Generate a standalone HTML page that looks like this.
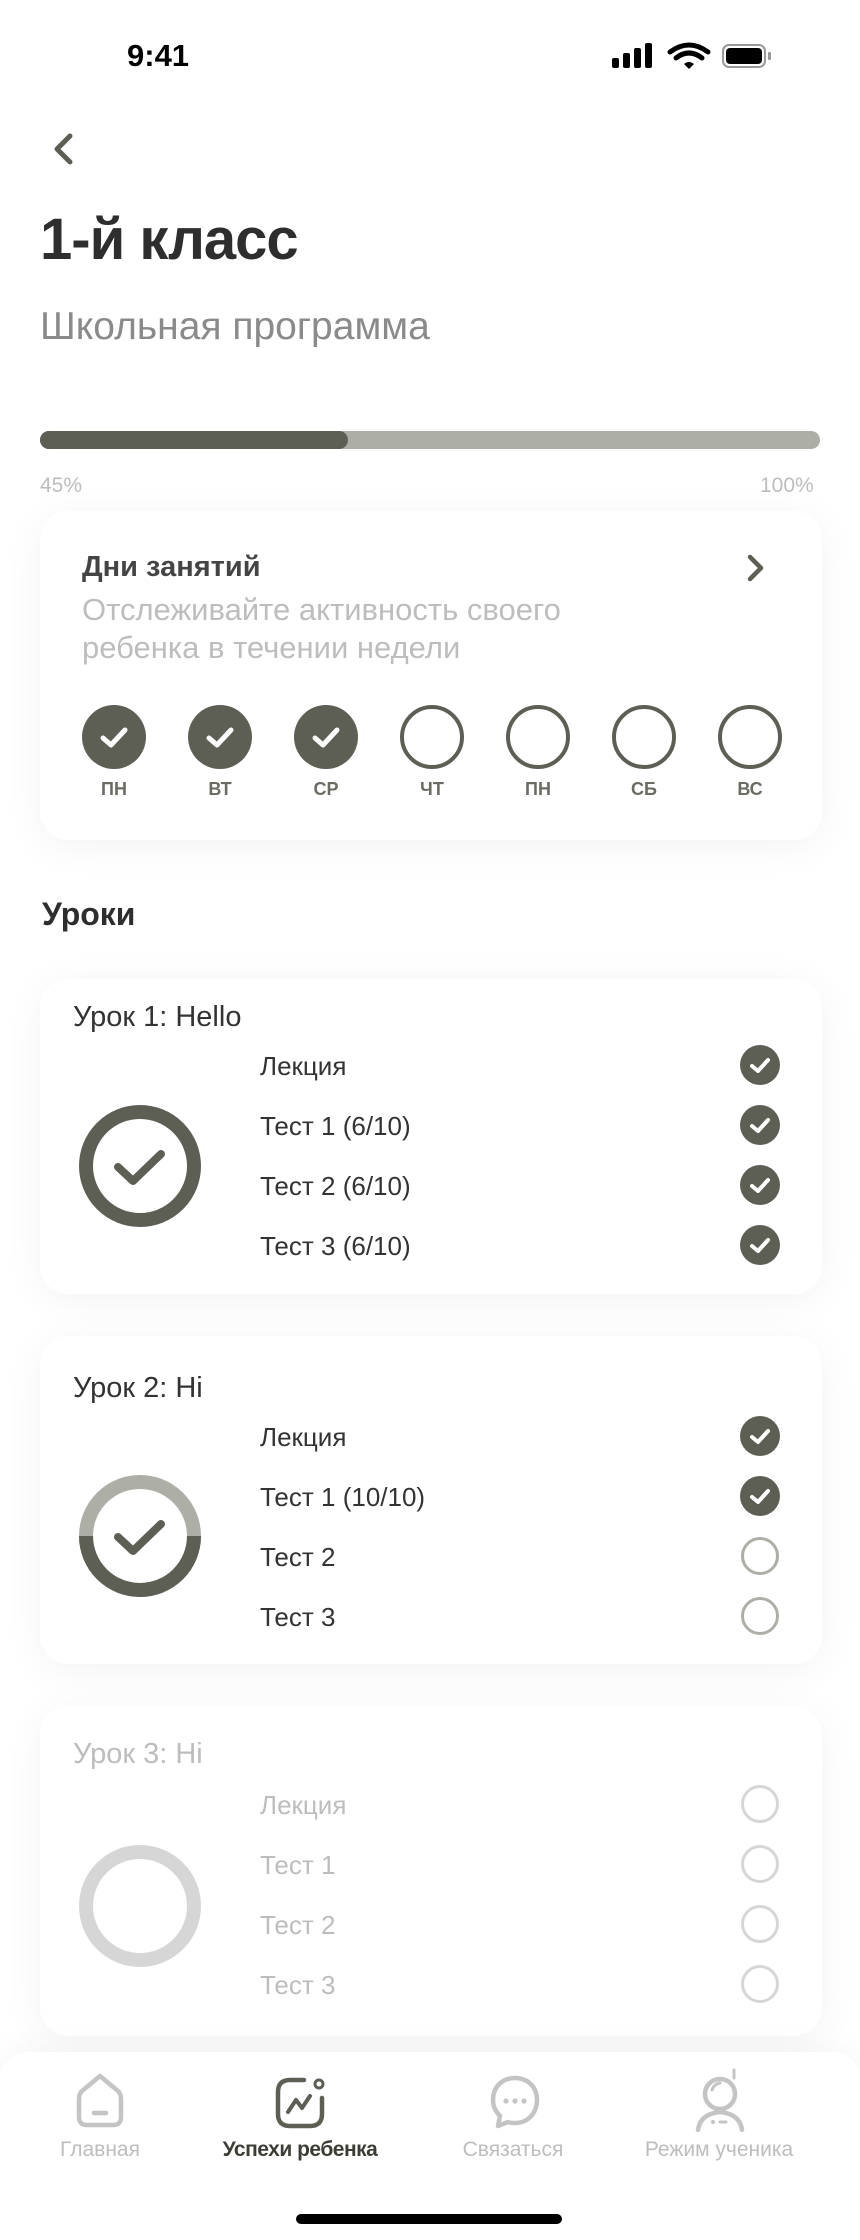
<!DOCTYPE html>
<html><head><meta charset="utf-8"><style>
*{margin:0;padding:0;box-sizing:border-box}
body{width:860px;height:2240px;background:#fff;font-family:"Liberation Sans","DejaVu Sans",sans-serif;position:relative;overflow:hidden;color:#333}
.a{position:absolute}
.card{position:absolute;left:40px;width:782px;background:#fff;border-radius:28px;box-shadow:0 6px 40px rgba(0,0,0,0.05)}
.day{position:absolute;top:194px;width:64px;height:64px;border-radius:50%;margin-left:-32px}
.day.on{background:#5d5f55}
.day.off{border:4px solid #5d5f55}
.dl{position:absolute;top:268px;width:60px;margin-left:-30px;text-align:center;font-size:18px;font-weight:bold;color:#6b6b63}
.lt{position:absolute;left:33px;top:22px;font-size:29px;color:#333}
.it{position:absolute;left:220px;font-size:26px;color:#333}
.ck{position:absolute;left:700px;width:40px;height:40px;margin-top:-2px}
.g .lt,.g .it{color:#bdbdbd}
.tab{position:absolute;top:2138px;width:200px;margin-left:-100px;text-align:center;font-size:21px;color:#bdbdbd}
</style></head><body>
<div class="a" style="left:127px;top:38px;font-size:31px;font-weight:bold;color:#000">9:41</div>
<svg class="a" style="left:610px;top:42px" width="175" height="30" viewBox="0 0 175 30">
<rect x="2" y="16" width="7" height="10" rx="2" fill="#000"/><rect x="13" y="11" width="7" height="15" rx="2" fill="#000"/><rect x="24" y="6" width="7" height="20" rx="2" fill="#000"/><rect x="35" y="1" width="7" height="25" rx="2" fill="#000"/>
<path d="M60 10 Q79 -4 98 10" stroke="#000" stroke-width="5" fill="none" stroke-linecap="round"/><path d="M66 16 Q79 6 92 16" stroke="#000" stroke-width="5" fill="none" stroke-linecap="round"/><path d="M74 22 L79 27 L84 22 Q79 18 74 22Z" fill="#000"/>
<rect x="113" y="3" width="42" height="22" rx="6" fill="none" stroke="#999" stroke-width="2"/><rect x="116" y="6" width="36" height="16" rx="4" fill="#000"/><rect x="158" y="10" width="3" height="8" rx="1" fill="#999"/>
</svg>
<svg class="a" style="left:48px;top:132px" width="30" height="36"><path d="M22 4 L9 17 L22 30" stroke="#5d5f55" stroke-width="5" fill="none" stroke-linecap="round" stroke-linejoin="round"/></svg>
<div class="a" style="left:40px;top:206px;font-size:58px;font-weight:bold;color:#2e2e2e;letter-spacing:-1px">1-й класс</div>
<div class="a" style="left:40px;top:305px;font-size:39px;color:#8a8a8a">Школьная программа</div>
<div class="a" style="left:40px;top:431px;width:780px;height:18px;border-radius:9px;background:#adaea6"></div>
<div class="a" style="left:40px;top:431px;width:308px;height:18px;border-radius:9px;background:#5d5f55"></div>
<div class="a" style="left:40px;top:474px;font-size:21px;color:#bdbdbd">45%</div>
<div class="a" style="left:760px;top:474px;font-size:21px;color:#bdbdbd">100%</div>

<div class="card" style="top:511px;height:329px">
<div class="a" style="left:42px;top:40px;font-size:29px;font-weight:bold;color:#444">Дни занятий</div>
<svg class="a" style="left:704px;top:42px" width="24" height="32"><path d="M6 4 L17 15 L6 26" stroke="#5d5f55" stroke-width="4.5" fill="none" stroke-linecap="round" stroke-linejoin="round"/></svg>
<div class="a" style="left:42px;top:80px;font-size:31px;line-height:38px;color:#bdbdbd">Отслеживайте активность своего<br>ребенка в течении недели</div>
<div class="day on" style="left:74px"><svg width="64" height="64"><path d="M21 33 L29 40 L43 25" stroke="#fff" stroke-width="5" fill="none" stroke-linecap="round" stroke-linejoin="round"/></svg></div>
<div class="day on" style="left:180px"><svg width="64" height="64"><path d="M21 33 L29 40 L43 25" stroke="#fff" stroke-width="5" fill="none" stroke-linecap="round" stroke-linejoin="round"/></svg></div>
<div class="day on" style="left:286px"><svg width="64" height="64"><path d="M21 33 L29 40 L43 25" stroke="#fff" stroke-width="5" fill="none" stroke-linecap="round" stroke-linejoin="round"/></svg></div>
<div class="day off" style="left:392px"></div><div class="day off" style="left:498px"></div><div class="day off" style="left:604px"></div><div class="day off" style="left:710px"></div>
<div class="dl" style="left:74px">ПН</div><div class="dl" style="left:180px">ВТ</div><div class="dl" style="left:286px">СР</div><div class="dl" style="left:392px">ЧТ</div><div class="dl" style="left:498px">ПН</div><div class="dl" style="left:604px">СБ</div><div class="dl" style="left:710px">ВС</div>
</div>

<div class="a" style="left:42px;top:896px;font-size:32px;font-weight:bold;color:#2e2e2e">Уроки</div>

<div class="card" style="top:979px;height:315px">
<div class="lt">Урок 1: Hello</div>
<svg class="a" style="left:38px;top:125px" width="124" height="124"><circle cx="62" cy="62" r="54" stroke="#5d5f55" stroke-width="14" fill="none"/><path d="M40 63 L55 77 L83 50" stroke="#5d5f55" stroke-width="8" fill="none" stroke-linecap="round" stroke-linejoin="round"/></svg>
<div class="it" style="top:72px">Лекция</div><div class="it" style="top:132px">Тест 1 (6/10)</div><div class="it" style="top:192px">Тест 2 (6/10)</div><div class="it" style="top:252px">Тест 3 (6/10)</div>
<svg class="ck" style="top:68px"><circle cx="20" cy="20" r="20" fill="#5d5f55"/><path d="M12 21 L18 26 L28 15" stroke="#fff" stroke-width="4" fill="none" stroke-linecap="round" stroke-linejoin="round"/></svg>
<svg class="ck" style="top:128px"><circle cx="20" cy="20" r="20" fill="#5d5f55"/><path d="M12 21 L18 26 L28 15" stroke="#fff" stroke-width="4" fill="none" stroke-linecap="round" stroke-linejoin="round"/></svg>
<svg class="ck" style="top:188px"><circle cx="20" cy="20" r="20" fill="#5d5f55"/><path d="M12 21 L18 26 L28 15" stroke="#fff" stroke-width="4" fill="none" stroke-linecap="round" stroke-linejoin="round"/></svg>
<svg class="ck" style="top:248px"><circle cx="20" cy="20" r="20" fill="#5d5f55"/><path d="M12 21 L18 26 L28 15" stroke="#fff" stroke-width="4" fill="none" stroke-linecap="round" stroke-linejoin="round"/></svg>
</div>

<div class="card" style="top:1336px;height:328px">
<div class="lt" style="top:36px">Урок 2: Hi</div>
<svg class="a" style="left:38px;top:138px" width="124" height="124"><circle cx="62" cy="62" r="54" stroke="#adaea6" stroke-width="14" fill="none"/><path d="M8 62 A54 54 0 0 0 116 62" stroke="#5d5f55" stroke-width="14" fill="none"/><path d="M40 63 L55 77 L83 50" stroke="#5d5f55" stroke-width="8" fill="none" stroke-linecap="round" stroke-linejoin="round"/></svg>
<div class="it" style="top:86px">Лекция</div><div class="it" style="top:146px">Тест 1 (10/10)</div><div class="it" style="top:206px">Тест 2</div><div class="it" style="top:266px">Тест 3</div>
<svg class="ck" style="top:82px"><circle cx="20" cy="20" r="20" fill="#5d5f55"/><path d="M12 21 L18 26 L28 15" stroke="#fff" stroke-width="4" fill="none" stroke-linecap="round" stroke-linejoin="round"/></svg>
<svg class="ck" style="top:142px"><circle cx="20" cy="20" r="20" fill="#5d5f55"/><path d="M12 21 L18 26 L28 15" stroke="#fff" stroke-width="4" fill="none" stroke-linecap="round" stroke-linejoin="round"/></svg>
<svg class="ck" style="top:202px"><circle cx="20" cy="20" r="17.5" stroke="#adaea6" stroke-width="3" fill="none"/></svg>
<svg class="ck" style="top:262px"><circle cx="20" cy="20" r="17.5" stroke="#adaea6" stroke-width="3" fill="none"/></svg>
</div>

<div class="card g" style="top:1706px;height:330px">
<div class="lt" style="top:32px">Урок 3: Hi</div>
<svg class="a" style="left:38px;top:138px" width="124" height="124"><circle cx="62" cy="62" r="54" stroke="#d6d6d6" stroke-width="14" fill="none"/></svg>
<div class="it" style="top:84px">Лекция</div><div class="it" style="top:144px">Тест 1</div><div class="it" style="top:204px">Тест 2</div><div class="it" style="top:264px">Тест 3</div>
<svg class="ck" style="top:80px"><circle cx="20" cy="20" r="17.5" stroke="#d6d6d6" stroke-width="3" fill="none"/></svg>
<svg class="ck" style="top:140px"><circle cx="20" cy="20" r="17.5" stroke="#d6d6d6" stroke-width="3" fill="none"/></svg>
<svg class="ck" style="top:200px"><circle cx="20" cy="20" r="17.5" stroke="#d6d6d6" stroke-width="3" fill="none"/></svg>
<svg class="ck" style="top:260px"><circle cx="20" cy="20" r="17.5" stroke="#d6d6d6" stroke-width="3" fill="none"/></svg>
</div>

<div class="a" style="left:0;top:2052px;width:860px;height:188px;background:#fff;border-radius:28px 28px 0 0;box-shadow:0 -6px 30px rgba(0,0,0,0.04)"></div>
<svg class="a" style="left:74px;top:2073px" width="52" height="56"><path d="M26 3 L8 18 Q5 21 5 26 L5 44 Q5 52 13 52 L39 52 Q47 52 47 44 L47 26 Q47 21 44 18 Z" stroke="#c4c4c4" stroke-width="4.5" fill="none" stroke-linejoin="round"/><path d="M20 40 H32" stroke="#c4c4c4" stroke-width="4.5" stroke-linecap="round"/></svg>
<svg class="a" style="left:274px;top:2076px" width="54" height="54"><path d="M30 4 H16 Q4 4 4 16 V38 Q4 50 16 50 H36 Q48 50 48 38 V22" stroke="#5d5f55" stroke-width="4.5" fill="none" stroke-linecap="round"/><circle cx="45" cy="8" r="4" stroke="#5d5f55" stroke-width="3" fill="none"/><path d="M14 36 L22 24 L28 32 L36 20" stroke="#5d5f55" stroke-width="4" fill="none" stroke-linecap="round" stroke-linejoin="round"/></svg>
<svg class="a" style="left:488px;top:2074px" width="54" height="56"><path d="M27 4 C14 4 5 13 5 26 C5 33 8 38 12 42 L10 52 L20 48 C22 49 25 49 27 49 C40 49 49 39 49 26 C49 13 40 4 27 4Z" stroke="#c4c4c4" stroke-width="4.5" fill="none" stroke-linejoin="round"/><circle cx="18" cy="27" r="2.6" fill="#c4c4c4"/><circle cx="27" cy="27" r="2.6" fill="#c4c4c4"/><circle cx="36" cy="27" r="2.6" fill="#c4c4c4"/></svg>
<svg class="a" style="left:692px;top:2066px" width="56" height="66"><path d="M42 4 V12" stroke="#c4c4c4" stroke-width="3" stroke-linecap="round"/><circle cx="28" cy="28" r="15" stroke="#c4c4c4" stroke-width="4.5" fill="none"/><path d="M20 24 Q22 18 28 17" stroke="#c4c4c4" stroke-width="3" fill="none" stroke-linecap="round"/><path d="M6 64 Q8 48 28 46 Q48 48 50 64" stroke="#c4c4c4" stroke-width="4.5" fill="none" stroke-linecap="round"/><circle cx="21" cy="56" r="2" fill="#c4c4c4"/><path d="M28 56 H34" stroke="#c4c4c4" stroke-width="3" stroke-linecap="round"/></svg>
<div class="tab" style="left:100px">Главная</div>
<div class="tab" style="left:300px;color:#3d3d36;font-weight:bold;letter-spacing:-0.5px">Успехи ребенка</div>
<div class="tab" style="left:513px">Связаться</div>
<div class="tab" style="left:719px">Режим ученика</div>
<div class="a" style="left:296px;top:2214px;width:266px;height:10px;border-radius:5px;background:#000"></div>
</body></html>
